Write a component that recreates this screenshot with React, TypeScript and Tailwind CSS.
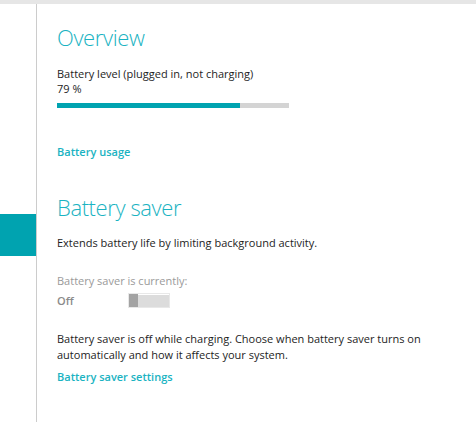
import React from 'react';

const teal = 'text-[#1ab3c2]';

const BatteryPage: React.FC = () => {
  const level = 79;

  return (
    <div className="w-[476px] h-[422px] bg-white overflow-hidden flex flex-col font-['Open_Sans',sans-serif] text-[#1d1d1d]">
      <div className="h-[4px] bg-[#e6e6e6] shrink-0" />
      <div className="flex flex-1">
        <div className="w-[36px] shrink-0 pt-[210px]">
          <div className="h-[42px] bg-[#00a3b0]" />
        </div>
        <div className="w-px bg-[#cccccc] shrink-0" />
        <div className="flex-1 pl-[20px] pt-[18px]">
          <h1 className={`text-[22px] font-light leading-[30px] tracking-[-0.4px] ${teal}`}>Overview</h1>
          <p className="mt-[14px] text-[11px] leading-[15px]">Battery level (plugged in, not charging)</p>
          <p className="text-[11px] leading-[15px]">{level} %</p>
          <div className="mt-[7px] w-[232px] h-[5px] bg-[#d4d4d4]">
            <div className="h-full bg-[#00a3b0]" style={{ width: `${level}%` }} />
          </div>
          <p className={`mt-[36px] text-[11px] leading-[15px] font-semibold ${teal}`}>Battery usage</p>

          <h2 className={`mt-[33px] text-[22px] font-light leading-[30px] tracking-[-0.4px] ${teal}`}>Battery saver</h2>
          <p className="mt-[13px] text-[11px] leading-[15px]">Extends battery life by limiting background activity.</p>

          <p className="mt-[23px] text-[11px] leading-[15px] text-[#9a9a9a]">Battery saver is currently:</p>
          <div className="mt-[5px] flex items-center">
            <span className="w-[71px] text-[11px] leading-[15px] font-semibold text-[#8a8a8a]">Off</span>
            <div className="w-[42px] h-[15px] flex bg-[#dcdcdc] border border-[#e8e8e8]">
              <div className="w-[9px] bg-[#a3a3a3]" />
              <div className="flex-1 border-t border-white" />
            </div>
          </div>

          <p className="mt-[23px] text-[11px] leading-[16px] w-[380px]">
            Battery saver is off while charging. Choose when battery saver turns on automatically and how it affects your system.
          </p>
          <p className={`mt-[6px] text-[11px] leading-[15px] font-semibold ${teal}`}>Battery saver settings</p>
        </div>
      </div>
    </div>
  );
};

export default function App() {
  return <BatteryPage />;
}
